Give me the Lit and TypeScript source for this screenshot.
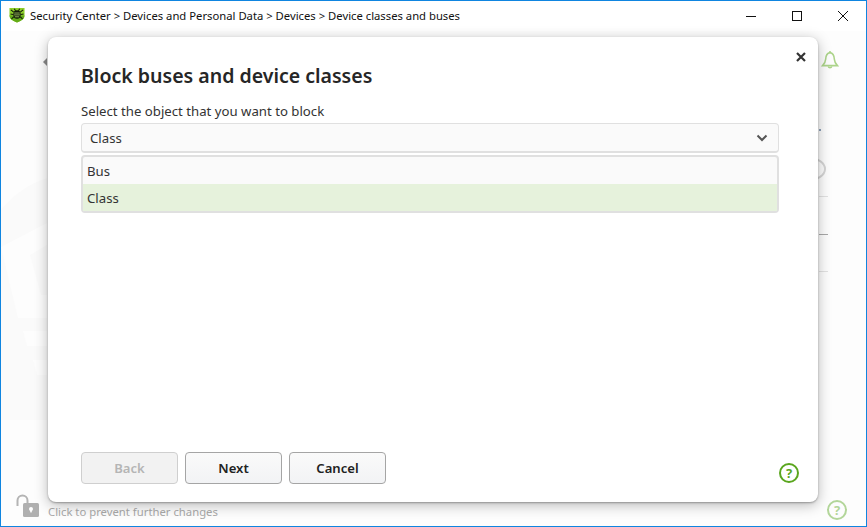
import { LitElement, css, html, svg } from "lit";
import { customElement } from "lit/decorators.js";

const watermark = svg`
  <svg class="watermark" viewBox="0 0 60 300" width="60" height="300">
    <path d="M0 90 Q20 66 46 58 L46 300 L0 300Z" fill="#fafafa" />
    <path d="M0 127 L46 103 L46 125 L29 135 L40 175 L46 175 L46 198 L17 198Z" fill="#fdfdfd" />
    <path d="M22 211 L46 211 L46 226 L26 226Z M32 240 L46 240 L46 255 L36 255Z" fill="#fdfdfd" />
  </svg>
`;

const logo = svg`
  <svg class="logo" viewBox="0 0 17 17" width="16" height="16">
    <path d="M.5 1 H16.5 V9 Q16.5 13.5 8.5 16.5 Q.5 13.5 .5 9Z" fill="#8ccf2a" />
    <path d="M.5 9 H16.5 Q16.5 13.5 8.5 16.5 Q.5 13.5 .5 9Z" fill="#63ab18" />
    <path d="M5 5.5 L2 3 M4.4 8 L1.6 7.4 M5 10.5 L2.6 12.6 M12 5.5 L15 3 M12.6 8 L15.4 7.4 M12 10.5 L14.4 12.6 M7 4 L5.6 1.8 M10 4 L11.4 1.8"
      stroke="#11190a" stroke-width="1.1" fill="none" />
    <ellipse cx="8.5" cy="8" rx="4" ry="4.6" fill="#11190a" />
    <path d="M5.6 6.4 H11.4 M5.4 8.4 H11.6 M6.2 10.4 H10.8" stroke="#b5e26c" stroke-width=".8" />
  </svg>
`;

const helpIcon = (cls: string) => html`
  <span class="help ${cls}">?</span>
`;

@customElement("app-root")
export class AppRoot extends LitElement {
  protected override render() {
    return html`
      <div class="window">
        <header class="titlebar">
          ${logo}
          <span class="crumbs">Security Center &gt; Devices and Personal Data &gt; Devices &gt; Device classes and buses</span>
          <div class="controls">
            <svg viewBox="0 0 12 12" width="12" height="12"><path d="M1 6.5 H11" stroke="#111" fill="none" /></svg>
            <svg viewBox="0 0 12 12" width="12" height="12"><rect x="1.5" y="1.5" width="9" height="9" stroke="#111" fill="none" /></svg>
            <svg viewBox="0 0 12 12" width="12" height="12"><path d="M1 1 L11 11 M11 1 L1 11" stroke="#111" fill="none" /></svg>
          </div>
        </header>

        <main class="backdrop">
          ${watermark}
          <span class="back-arrow"></span>
          <svg class="bell" viewBox="0 0 20 20" width="20" height="20">
            <path d="M10 2.6 C6.4 3 5.8 6 5.6 9.5 C5.5 12 4.4 13.6 2.6 15.6 H17.4 C15.6 13.6 14.5 12 14.4 9.5 C14.2 6 13.6 3 10 2.6Z"
              fill="none" stroke="#acd48a" stroke-width="1.6" />
            <path d="M8.2 16.4 A1.9 1.9 0 0 0 11.8 16.4" fill="none" stroke="#acd48a" stroke-width="1.5" />
            <path d="M10 1 V2.6" stroke="#acd48a" stroke-width="1.5" />
          </svg>
          <span class="peek peek-circle"></span>
          <span class="peek peek-line" style="top:165px"></span>
          <span class="peek peek-line dark" style="top:203px"></span>
          <span class="peek peek-line" style="top:240px"></span>
          <span class="peek peek-dot"></span>

          <footer class="lockbar">
            <svg viewBox="0 0 26 26" width="26" height="26">
              <path d="M3.5 12 V6.5 A5 5 0 0 1 13.5 6.5 V10" fill="none" stroke="#b4b4b4" stroke-width="2" />
              <rect x="9" y="9" width="16" height="14" rx="1.5" fill="#b0b0b0" />
              <circle cx="17" cy="15" r="2" fill="#fff" />
              <rect x="16.2" y="15" width="1.6" height="3.4" fill="#fff" />
            </svg>
            <span>Click to prevent further changes</span>
          </footer>
          ${helpIcon("faded")}

          <section class="dialog">
            <button class="close" aria-label="Close">
              <svg viewBox="0 0 12 12" width="12" height="12"><path d="M2 2 L10 10 M10 2 L2 10" stroke="#333" stroke-width="2.2" fill="none" /></svg>
            </button>
            <h1>Block buses and device classes</h1>
            <label>Select the object that you want to block</label>
            <div class="select">
              <span>Class</span>
              <svg viewBox="0 0 12 8" width="12" height="8"><path d="M1.5 1.5 L6 6 L10.5 1.5" stroke="#555" stroke-width="2" fill="none" /></svg>
            </div>
            <ul class="options">
              <li>Bus</li>
              <li class="selected">Class</li>
            </ul>
            <div class="actions">
              <button class="btn" disabled>Back</button>
              <button class="btn">Next</button>
              <button class="btn">Cancel</button>
              ${helpIcon("strong")}
            </div>
          </section>
        </main>
      </div>
    `;
  }

  static override styles = css`
    :host {
      display: block;
      font-family: "Noto Sans", "Open Sans", sans-serif;
    }
    .window {
      box-sizing: border-box;
      width: 867px;
      height: 527px;
      border: 1px solid #0f85e0;
      display: flex;
      flex-direction: column;
      background: #fff;
      overflow: hidden;
    }
    .titlebar {
      height: 30px;
      flex: none;
      display: flex;
      align-items: center;
      padding-left: 8px;
      background: #fff;
    }
    .logo {
      flex: none;
      margin-top: -2px;
    }
    .crumbs {
      margin-left: 5px;
      margin-top: -1px;
      font-size: 11.27px;
      color: #111;
      white-space: nowrap;
    }
    .controls {
      margin-left: auto;
      display: flex;
      gap: 34px;
      padding-right: 17px;
      margin-top: -1px;
    }
    .controls svg {
      display: block;
    }
    .backdrop {
      position: relative;
      flex: 1;
      background: #fdfdfd;
    }
    .watermark {
      position: absolute;
      left: 0;
      top: 89px;
    }
    .back-arrow {
      position: absolute;
      left: 42px;
      top: 27px;
      border: 4px solid transparent;
      border-right: 4px solid #888;
      border-left: 0;
    }
    .bell {
      position: absolute;
      left: 819px;
      top: 19px;
    }
    .peek {
      position: absolute;
    }
    .peek-circle {
      left: 791px;
      top: 126px;
      width: 34px;
      height: 24px;
      box-sizing: border-box;
      border: 2px solid #d5d5d5;
      border-radius: 50%;
    }
    .peek-line {
      left: 818px;
      width: 9px;
      height: 1px;
      background: #e2e2e2;
    }
    .peek-line.dark {
      background: #a8a8a8;
    }
    .peek-dot {
      left: 818px;
      top: 98px;
      width: 2px;
      height: 2px;
      background: #8ca0b8;
    }
    .lockbar {
      position: absolute;
      left: 13px;
      top: 463px;
      display: flex;
      align-items: center;
      gap: 8px;
      font-size: 11.3px;
      color: #a9a9a9;
    }
    .lockbar span {
      margin-top: 8px;
    }
    .help {
      box-sizing: border-box;
      display: flex;
      align-items: center;
      justify-content: center;
      width: 20px;
      height: 20px;
      border: 2px solid #5aa61e;
      border-radius: 50%;
      color: #5aa61e;
      font-size: 13px;
      font-weight: 700;
      line-height: 1;
    }
    .help.faded {
      position: absolute;
      left: 826px;
      top: 469px;
      border-color: #b3d69a;
      color: #b3d69a;
    }
    .help.strong {
      margin-left: auto;
      margin-right: -20px;
      margin-top: 11px;
    }
    .dialog {
      position: absolute;
      left: 47px;
      top: 6px;
      box-sizing: border-box;
      width: 770px;
      height: 465px;
      padding: 24px 39px 18px 33px;
      display: flex;
      flex-direction: column;
      background: #fff;
      border-radius: 8px;
      box-shadow: 0 1px 2px rgba(0, 0, 0, 0.3), 0 3px 14px rgba(0, 0, 0, 0.28);
    }
    .close {
      position: absolute;
      right: 11px;
      top: 14px;
      padding: 0;
      border: 0;
      background: none;
      line-height: 0;
    }
    h1 {
      margin: 0;
      font-size: 19.55px;
      font-weight: 600;
      line-height: 30px;
      color: #262626;
    }
    label {
      margin-top: 11px;
      font-size: 13.2px;
      line-height: 18px;
      color: #333;
    }
    .select {
      box-sizing: border-box;
      margin-top: 3px;
      height: 30px;
      display: flex;
      align-items: center;
      justify-content: space-between;
      padding: 0 10px 0 8px;
      font-size: 13.2px;
      color: #333;
      background: #fafafa;
      border: 1px solid #e0e0e0;
      border-bottom-width: 2px;
      border-radius: 4px;
    }
    .options {
      box-sizing: border-box;
      list-style: none;
      margin: 2px 0 0;
      padding: 0;
      border: 2px solid #e0e0e0;
      border-radius: 4px;
      background: #fafafa;
      font-size: 13.2px;
      color: #333;
    }
    .options li {
      height: 27px;
      line-height: 29px;
      padding-left: 4px;
    }
    .options li.selected {
      background: #e6f2dc;
    }
    .actions {
      margin-top: auto;
      display: flex;
      gap: 7px;
    }
    .btn {
      width: 97px;
      height: 32px;
      padding: 0;
      font: 600 13.1px "Noto Sans", "Open Sans", sans-serif;
      color: #222;
      background: linear-gradient(#fafafa, #f2f3f5);
      border: 1px solid #a5a5a5;
      border-radius: 4px;
    }
    .btn:disabled {
      color: #b5b5b5;
      background: #f2f2f2;
      border-color: #cfcfcf;
    }
  `;
}

declare global {
  interface HTMLElementTagNameMap {
    "app-root": AppRoot;
  }
}
